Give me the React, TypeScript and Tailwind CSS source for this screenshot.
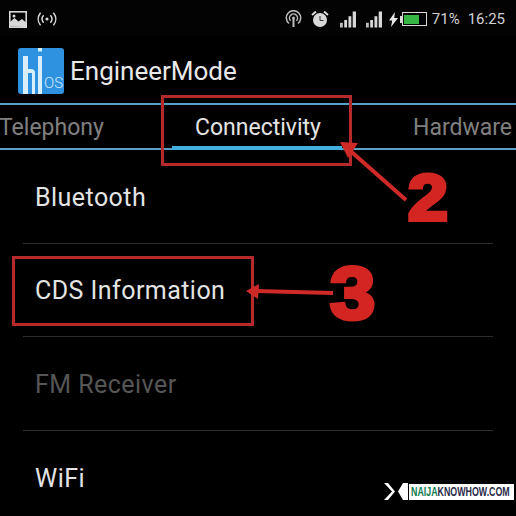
import React from "react";

const ImageIcon = () => (
  <svg width="18" height="17" viewBox="0 0 18 17">
    <rect x="0.8" y="0.8" width="16.4" height="15.4" fill="none" stroke="#d8d8d8" strokeWidth="1.6" />
    <path d="M1 15.5V11l4.5-4 4 3.5 3.5-2.5 4 3.5v4.5z" fill="#d8d8d8" />
    <circle cx="5" cy="5" r="1.5" fill="#d8d8d8" />
  </svg>
);

const HotspotIcon = () => (
  <svg width="20" height="14" viewBox="0 0 20 14" fill="none" stroke="#d8d8d8" strokeWidth="1.5" strokeLinecap="round">
    <circle cx="10" cy="7" r="1.6" fill="#d8d8d8" stroke="none" />
    <path d="M6.3 3.8a5 5 0 0 0 0 6.4M13.7 3.8a5 5 0 0 1 0 6.4" />
    <path d="M3.2 1.2a9.5 9.5 0 0 0 0 11.6M16.8 1.2a9.5 9.5 0 0 1 0 11.6" />
  </svg>
);

const WifiTetherIcon = () => (
  <svg width="17" height="18" viewBox="0 0 17 18" fill="none" stroke="#bdbdbd" strokeWidth="1.5">
    <path d="M4 13.5a7.2 7.2 0 1 1 9 0" />
    <path d="M5.6 10.8a4 4 0 1 1 5.8 0" />
    <circle cx="8.5" cy="8" r="1.5" fill="#bdbdbd" stroke="none" />
    <path d="M8.5 9v8" strokeWidth="2" />
  </svg>
);

const AlarmIcon = () => (
  <svg width="18" height="18" viewBox="0 0 18 18">
    <circle cx="9" cy="10" r="7" fill="#d8d8d8" />
    <path d="M9 6v4.5h3.5" fill="none" stroke="#333" strokeWidth="1" />
    <path d="M1 5l4-3.5M17 5l-4-3.5" stroke="#d8d8d8" strokeWidth="2" />
  </svg>
);

const SignalIcon = () => (
  <svg width="16" height="17" viewBox="0 0 17 17" fill="#d8d8d8">
    <rect x="0" y="12" width="3" height="5" fill="#bdbdbd" />
    <rect x="4.5" y="9" width="3" height="8" />
    <rect x="9" y="5" width="3" height="12" />
    <rect x="13.5" y="0" width="3.5" height="17" />
  </svg>
);

const BoltIcon = () => (
  <svg width="9" height="15" viewBox="0 0 9 15">
    <path d="M6 0L0 8.5h3.2L2 15l7-9H5.2z" fill="#e8e8e8" />
  </svg>
);

const Battery = () => (
  <div className="flex items-center">
    <div className="w-[2px] h-[7px] bg-[#d8d8d8]" />
    <div className="w-[25px] h-[14px] border border-[#d8d8d8] p-[1.5px]">
      <div className="h-full w-[74%] bg-[#35b544]" />
    </div>
  </div>
);

const HiOsLogo = () => (
  <svg width="46" height="46" viewBox="0 0 46 46">
    <path d="M3 0H43a3 3 0 0 1 3 3V43a3 3 0 0 1-3 3H3a3 3 0 0 1-3-3V3a3 3 0 0 1 3-3z" fill="#2f92e0" />
    <rect x="5" y="8" width="5" height="38" fill="#d9eefb" />
    <path d="M10 21h3a4 4 0 0 1 4 4v21h-3V25h-4z" fill="#d9eefb" />
    <rect x="20" y="0" width="4" height="3.5" fill="#d9eefb" />
    <rect x="20" y="8" width="4" height="38" fill="#d9eefb" />
    <text x="26" y="40" fontSize="15" fill="#cfe9fb" fontFamily="Roboto, sans-serif" fontWeight="300">OS</text>
  </svg>
);

const Row = ({ label, muted, last }: { label: string; muted?: boolean; last?: boolean }) => (
  <div className={`ml-[23px] mr-[23px] h-[93.5px] flex items-center pl-[12px] pt-[2px] shrink-0 ${last ? "" : "border-b border-[#2c2c2c]"}`}>
    <span className={`text-[25px] tracking-[0.45px] ${muted ? "text-[#565656]" : "text-[#e4e4e4]"}`}>{label}</span>
  </div>
);

export default function App() {
  return (
    <div className="relative w-[516px] h-[516px] overflow-hidden bg-black font-['Roboto',sans-serif]">
      {/* status bar */}
      <div className="h-[36px] flex items-center justify-between pl-[9px] pr-[11px] pt-[2px] bg-[#030303]">
        <div className="flex items-center gap-[10px]">
          <ImageIcon />
          <HotspotIcon />
        </div>
        <div className="flex items-center text-[#d0d0d0] text-[15px]">
          <WifiTetherIcon />
          <div className="ml-[9px]"><AlarmIcon /></div>
          <div className="ml-[11px]"><SignalIcon /></div>
          <div className="ml-[10px]"><SignalIcon /></div>
          <div className="ml-[7px]"><BoltIcon /></div>
          <div className="ml-[2px]"><Battery /></div>
          <span className="ml-[5px]">71%</span>
          <span className="ml-[8px]">16:25</span>
        </div>
      </div>

      {/* title */}
      <div className="h-[67px] flex items-center pl-[18px] pt-[2px]">
        <HiOsLogo />
        <span className="ml-[6px] mt-[2px] text-[26px] text-[#e8e8e8]">EngineerMode</span>
      </div>

      {/* tabs */}
      <div className="relative h-[47px] border-y-2 border-[#5aa0c4] flex items-center pt-[3px] text-[23px]">
        <span className="absolute left-[-1px] text-[#808080]">Telephony</span>
        <span className="absolute left-[195px] text-[#e4e4e4]">Connectivity</span>
        <span className="absolute left-[413px] text-[#808080]">Hardware</span>
        <div className="absolute left-[172px] bottom-[-2px] w-[170px] h-[4px] bg-[#3fb0de]" />
      </div>

      {/* list */}
      <div className="flex flex-col">
        <Row label="Bluetooth" />
        <Row label="CDS Information" />
        <Row label="FM Receiver" muted />
        <Row label="WiFi" last />
      </div>

      {/* red annotations */}
      <div className="absolute left-[161px] top-[95px] w-[191px] h-[71px] border-[3px] border-[#b52a2a]" />
      <div className="absolute left-[12px] top-[256px] w-[242px] h-[70px] border-[3px] border-[#b52a2a]" />
      <svg className="absolute left-0 top-0" width="516" height="516" viewBox="0 0 516 516">
        <path d="M406 200L346 147" stroke="#cf2a28" strokeWidth="4" />
        <path d="M340 142l18 1-10 15z" fill="#cf2a28" />
        <path d="M333 293L256 291" stroke="#cf2a28" strokeWidth="4" />
        <path d="M246 291l13-7-1 15z" fill="#cf2a28" />
      </svg>
      <span className="absolute left-[408px] top-[163px] text-[64px] leading-[70px] font-black text-[#d32522] font-['Liberation_Sans',sans-serif] [-webkit-text-stroke:4px_#d32522] scale-x-[1.12] origin-left">2</span>
      <span className="absolute left-[330px] top-[257px] text-[74px] leading-[74px] font-black text-[#d32522] font-['Liberation_Sans',sans-serif] [-webkit-text-stroke:4px_#d32522] scale-x-[1.1] origin-left">3</span>

      {/* watermark */}
      <div className="absolute left-[384px] top-[483px] flex items-center">
        <svg width="24" height="17" viewBox="0 0 24 17"><path d="M0 0h24v17H0l8-8.5z" fill="#fff" /><path d="M4 0h15l-5 8.5L19 17H4l7-8.5z" fill="#000" /></svg>
        <div className="ml-[1px] h-[16px] w-[105px] bg-white flex items-center pl-[2px] font-bold font-['Liberation_Sans',sans-serif]">
          <span className="w-[100px] text-[13px] leading-none whitespace-nowrap scale-x-[0.68] origin-left">
            <span className="text-[#0f7a4f]">NAIJA</span>
            <span className="text-[#2a2a4a]">KNOWHOW.COM</span>
          </span>
        </div>
      </div>
    </div>
  );
}
